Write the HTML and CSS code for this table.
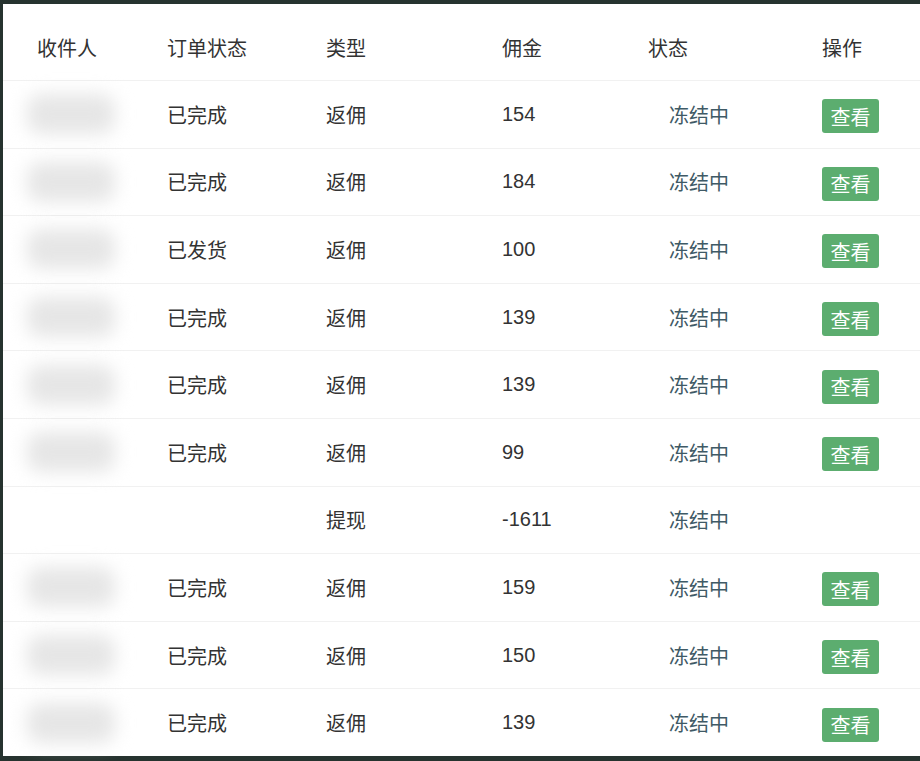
FILE: index.html
```html
<!DOCTYPE html>
<html lang="zh">
<head>
<meta charset="utf-8">
<link rel="stylesheet" href="styles.css">
</head>
<body>
<div class="frame">
  <div class="row head">
    <div class="c c1">收件人</div>
    <div class="c">订单状态</div>
    <div class="c">类型</div>
    <div class="c">佣金</div>
    <div class="c">状态</div>
    <div class="c">操作</div>
  </div>
  <div class="row"><div class="c c1"><span class="blob"></span></div><div class="c">已完成</div><div class="c">返佣</div><div class="c">154</div><div class="c st">冻结中</div><div class="c"><span class="btn">查看</span></div></div>
  <div class="row"><div class="c c1"><span class="blob"></span></div><div class="c">已完成</div><div class="c">返佣</div><div class="c">184</div><div class="c st">冻结中</div><div class="c"><span class="btn">查看</span></div></div>
  <div class="row"><div class="c c1"><span class="blob"></span></div><div class="c">已发货</div><div class="c">返佣</div><div class="c">100</div><div class="c st">冻结中</div><div class="c"><span class="btn">查看</span></div></div>
  <div class="row"><div class="c c1"><span class="blob"></span></div><div class="c">已完成</div><div class="c">返佣</div><div class="c">139</div><div class="c st">冻结中</div><div class="c"><span class="btn">查看</span></div></div>
  <div class="row"><div class="c c1"><span class="blob"></span></div><div class="c">已完成</div><div class="c">返佣</div><div class="c">139</div><div class="c st">冻结中</div><div class="c"><span class="btn">查看</span></div></div>
  <div class="row"><div class="c c1"><span class="blob"></span></div><div class="c">已完成</div><div class="c">返佣</div><div class="c">99</div><div class="c st">冻结中</div><div class="c"><span class="btn">查看</span></div></div>
  <div class="row"><div class="c c1"></div><div class="c"></div><div class="c">提现</div><div class="c">-1611</div><div class="c st">冻结中</div><div class="c"></div></div>
  <div class="row"><div class="c c1"><span class="blob"></span></div><div class="c">已完成</div><div class="c">返佣</div><div class="c">159</div><div class="c st">冻结中</div><div class="c"><span class="btn">查看</span></div></div>
  <div class="row"><div class="c c1"><span class="blob"></span></div><div class="c">已完成</div><div class="c">返佣</div><div class="c">150</div><div class="c st">冻结中</div><div class="c"><span class="btn">查看</span></div></div>
  <div class="row last"><div class="c c1"><span class="blob"></span></div><div class="c">已完成</div><div class="c">返佣</div><div class="c">139</div><div class="c st">冻结中</div><div class="c"><span class="btn">查看</span></div></div>
</div>
</body>
</html>
```
FILE: styles.css
```css
html, body {
  margin: 0;
  padding: 0;
  background: #26332f;
  height: 761px;
  overflow: hidden;
}
.frame {
  margin: 4px 0 5px 3px;
  height: 752px;
  background: #fff;
  font-family: "Liberation Sans", "Noto Sans CJK SC", sans-serif;
  font-size: 20px;
  color: #333;
  display: flex;
  flex-direction: column;
}
.row {
  display: grid;
  grid-template-columns: 164px 159px 176px 146px 174px 1fr;
  align-items: center;
  height: 67.6px;
  border-top: 1px solid #f1f1f1;
  box-sizing: border-box;
}
.row.head {
  height: 76px;
  border-top: none;
  padding-top: 10px;
  box-sizing: border-box;
}
.c1 {
  padding-left: 34px;
  display: flex;
  align-items: center;
}
.st {
  padding-left: 21px;
  color: #3f5a66;
}
.blob {
  display: block;
  width: 88px;
  height: 40px;
  margin-left: -10px;
  background: #e6e6e6;
  border-radius: 14px;
  filter: blur(9px);
}
.btn {
  display: inline-flex;
  align-items: center;
  justify-content: center;
  width: 57px;
  height: 34px;
  margin-top: 4px;
  border-radius: 3px;
  background: #5cad6f;
  color: #fff;
  font-size: 20px;
}
```
